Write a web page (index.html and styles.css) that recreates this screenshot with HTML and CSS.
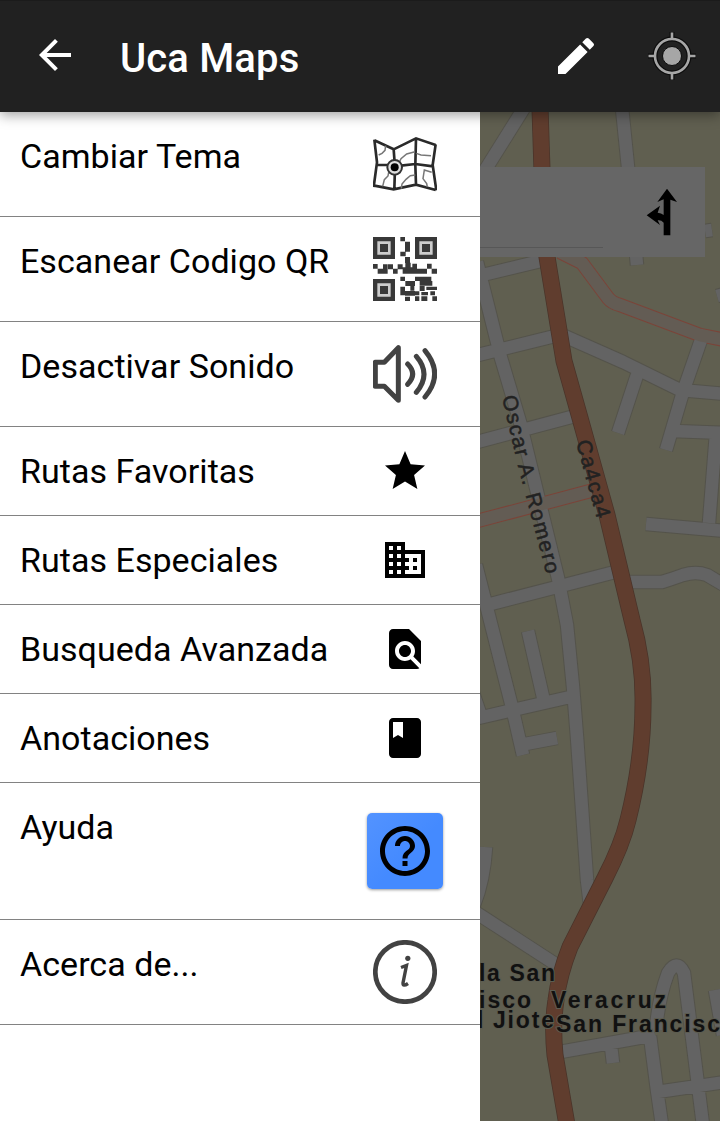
FILE: index.html
```html
<!DOCTYPE html>
<html lang="es">
<head>
<meta charset="utf-8">
<title>Uca Maps</title>
<link rel="stylesheet" href="styles.css">
</head>
<body>
<div class="app">
  <header class="bar">
    <svg class="back" viewBox="0 0 24 24"><path d="M20 11H7.83l5.59-5.59L12 4l-8 8 8 8 1.41-1.41L7.83 13H20z"/></svg>
    <h1 class="title">Uca Maps</h1>
    <svg class="edit" viewBox="0 0 24 24"><path d="M3 17.25V21h3.75L17.81 9.94l-3.75-3.75zM20.71 7.04a1 1 0 0 0 0-1.41l-2.34-2.34a1 1 0 0 0-1.41 0l-1.83 1.83 3.75 3.75z"/></svg>
    <svg class="locate" viewBox="0 0 48 48">
      <g class="locate-halo"><circle cx="24" cy="24" r="17"/><path d="M24 0v8M24 40v8M0 24h8M40 24h8"/></g>
      <g class="locate-ring"><circle cx="24" cy="24" r="17"/><path d="M24 .5v7M24 40.500v7M.5 24h7M40.500 24h7"/></g>
      <circle class="locate-dot" cx="24" cy="24" r="9.500"/>
    </svg>
  </header>
  <main class="body">
    <nav class="drawer">
      <div class="row"><span class="label">Cambiar Tema</span><span class="cell">
        <svg class="pic" viewBox="0 11 192 192">
          <g class="map-lines"><path d="M4 36 62 63 129 30 188 50M4 172 62 183 129 169 188 185M4 34 12 102 2 176M62 63 66 118 64 183M129 30 127 110 129 169M188 48 179 110 190 186M12 110H48M84 112 127 107 180 114"/></g>
          <g class="map-thin"><path d="M38 52 36 66 27 75 17 80M76 108 84 91 101 77 126 70M130 75 144 80 174 82M29 174 34 154 45 143 47 132M85 181 87 167 99 153 112 142 127 140M176 132 154 125 150 151 161 166 163 176"/></g>
          <circle class="map-pin-ring" cx="65" cy="117" r="22"/><circle cx="65" cy="117" r="12"/>
        </svg></span></div>
      <div class="row"><span class="label">Escanear Codigo QR</span><span class="cell">
        <svg class="pic qr" viewBox="0 0 192 192">
          <g><path d="M0 0h66v66H0zM126 0h66v66h-66zM0 126h66v66H0z"/>
          <path class="qr-light" d="M13 13h40v40H13zM139 13h40v40h-40zM13 139h40v40H13z"/>
          <path d="M21 21h24v24H21zM147 21h24v24h-24zM21 147h24v24H21z"/>
          <path d="M82 0h14v13H82zM96 14h15v30H96zM82 44h16v14H82zM96 60h15v18H96zM0 81h14v14H0zM14 95h30v15H14zM30 82h14v13H30zM45 82h15v15H45zM60 95h14v15H60zM74 82h15v15H74zM89 91h43v19H89zM97 77h16v14H97zM118 80h14v15h-14zM132 95h15v15h-15zM147 95h15v15h-15zM162 80h14v15h-14zM176 95h16v15h-16zM82 119h14v13H82zM126 119h49v13h-49zM97 132h29v15H97zM140 132h38v14h-38zM82 149h14v26H82zM96 162h30v14H96zM112 147h12v14h-12zM140 147h15v15h-15zM160 149h32v10h-32zM125 163h14v12h-14zM145 165h20v10h-20zM172 163h14v12h-14zM96 179h15v13H96zM126 178h13v14h-13zM145 178h18v14h-18zM178 178h14v14h-14z"/></g>
        </svg></span></div>
      <div class="row"><span class="label">Desactivar Sonido</span><span class="cell">
        <svg class="pic sound" viewBox="0 0 192 192"><path d="M7 61H34L76 17V175L34 133H7Z"/><path d="M104 66Q134 96 104 127M130 43Q176 96 130 151M156 26Q214 96 156 165"/></svg></span></div>
      <div class="row"><span class="label">Rutas Favoritas</span><span class="cell">
        <svg class="icon" viewBox="0 0 24 24"><path d="M12 17.27 18.180 21l-1.640-7.030L22 9.240l-7.190-.610L12 2 9.190 8.630 2 9.240l5.460 4.730L5.820 21z"/></svg></span></div>
      <div class="row"><span class="label">Rutas Especiales</span><span class="cell">
        <svg class="icon" viewBox="0 0 24 24"><path d="M12 7V3H2v18h20V7H12zM6 19H4v-2h2v2zm0-4H4v-2h2v2zm0-4H4V9h2v2zm0-4H4V5h2v2zm4 12H8v-2h2v2zm0-4H8v-2h2v2zm0-4H8V9h2v2zm0-4H8V5h2v2zm10 12h-8v-2h2v-2h-2v-2h2v-2h-2V9h8v10zm-2-8h-2v2h2v-2zm0 4h-2v2h2v-2z"/></svg></span></div>
      <div class="row"><span class="label">Busqueda Avanzada</span><span class="cell">
        <svg class="icon" viewBox="0 0 24 24"><path d="M20 19.590V8l-6-6H6c-1.100 0-1.990.9-1.990 2L4 20c0 1.100.89 2 1.990 2H18c.45 0 .85-.15 1.190-.4l-4.430-4.430c-.8.520-1.740.830-2.760.830-2.760 0-5-2.240-5-5s2.240-5 5-5 5 2.240 5 5c0 1.020-.31 1.960-.83 2.750L20 19.590zM9 13c0 1.660 1.340 3 3 3s3-1.340 3-3-1.340-3-3-3-3 1.340-3 3z"/></svg></span></div>
      <div class="row"><span class="label">Anotaciones</span><span class="cell">
        <svg class="icon" viewBox="0 0 24 24"><path d="M18 2H6c-1.100 0-2 .9-2 2v16c0 1.100.9 2 2 2h12c1.100 0 2-.9 2-2V4c0-1.100-.9-2-2-2zM6 4h5v8l-2.500-1.500L6 12V4z"/></svg></span></div>
      <div class="row"><span class="label">Ayuda</span><span class="cell help-cell"><span class="help">
        <svg viewBox="0 0 24 24"><path d="M11 18h2v-2h-2v2zm1-16C6.480 2 2 6.480 2 12s4.480 10 10 10 10-4.480 10-10S17.520 2 12 2zm0 18c-4.410 0-8-3.590-8-8s3.590-8 8-8 8 3.590 8 8-3.590 8-8 8zm0-14c-2.210 0-4 1.790-4 4h2c0-1.100.9-2 2-2s2 .9 2 2c0 2-3 1.750-3 5h2c0-2.250 3-2.500 3-5 0-2.210-1.790-4-4-4z"/></svg></span></span></div>
      <div class="row"><span class="label">Acerca de...</span><span class="cell">
        <svg class="pic info" viewBox="0 0 64 64"><circle cx="32" cy="32" r="29.700"/><path d="M28 27.500 33.500 25.500 30 43Q29.800 47 35 43.500"/><circle class="info-dot" cx="34.800" cy="18.300" r="2.600"/></svg></span></div>
    </nav>
    <section class="map">
      <svg class="map-art" viewBox="480 112 240 1009">
        <defs>
          <g id="streets">
            <path d="M524 108 484 172M622 108 628 167 637 265M705 231 712 230M717 296 724 294M470 278 545 260M477 262 501 358 520 422 558 578 567 625 573 687 577 737 587 880 590 905M470 357 555 336M562 335 623 362 680 390 725 394M701 340 683 392 666 450M637 375 618 433M673 431 725 433M716 434 709 523M646 524 725 531M470 444 575 416M476 565 490 620 512 707 523 755M487 605 615 572M625 582H662Q672 579 683 575 696 571 707 575L724 585M528 631 543 697M472 690 481 716M470 720 513 710 570 697M520 745 557 738M486 847Q484 880 474 905M472 910 560 967M560 1052 655 1035M611 1046 613 1063M650 1036 657 1090 662 1125M656 1030Q658 1000 668 973 677 958 684 973L692 1037 703 1125M657 1092 725 1082M715 990 723 1035"/>
          </g>
          <g id="avenue"><path d="M560 252 582 263 608 298Q612 303 620 305L700 335 725 340M470 523 594 490"/></g>
          <path id="highway" d="M540 108 542 170 547 257 564 361 580 418 607 515 632 620Q644 663 643 705 643 760 628 820 622 845 605 878L570 947Q559 975 556 1000 552 1025 555 1055L567 1125"/>
        </defs>
        <rect class="land" x="480" y="112" width="240" height="1009"/>
        <use href="#streets" class="street-edge"/><use href="#avenue" class="avenue-edge"/>
        <use href="#streets" class="street"/><use href="#avenue" class="avenue"/>
        <use href="#highway" class="highway-edge"/><use href="#highway" class="highway"/>
        <g class="street-name">
          <path id="oscar" class="guide" d="M502 397 519 470 547 576 556 610"/>
          <text><textPath href="#oscar" textLength="183">Oscar A. Romero</textPath></text>
          <path id="ca" class="guide" d="M576 442 597 519 606 552"/>
          <text><textPath href="#ca" textLength="80">Ca4ca4</textPath></text>
        </g>
        <g class="place">
          <text x="479" y="981" textLength="76">la San</text>
          <text x="479" y="1008" textLength="52">isco</text>
          <text x="551" y="1008" textLength="115">Veracruz</text>
          <text x="477" y="1028">l</text>
          <text x="493" y="1028" textLength="61">Jiote</text>
          <text x="556" y="1032" textLength="180">San Francisco</text>
        </g>
      </svg>
      <div class="search"><span class="search-line"></span>
        <svg class="turn" viewBox="0 0 96 144"><path d="M53 142V104Q45 95 35 97L42 111 2 82 42 53 35 74Q46 75 53 81V34L34 42 63 2 93 42 73 35V142Z"/></svg>
      </div>
    </section>
  </main>
</div>
</body>
</html>
```
FILE: styles.css
```css
* { box-sizing: border-box; }
body { margin: 0; background: #fff; font-family: Roboto, "Liberation Sans", sans-serif; }
.app { width: 720px; height: 1121px; display: flex; flex-direction: column; overflow: hidden; }
.bar { height: 112px; flex: none; display: flex; align-items: center; padding: 0 24px 1px 31px; background: #212121; color: #fff; border-top: 1px solid #1b1b1b; z-index: 2; box-shadow: 0 3px 12px rgba(0,0,0,.38); }
.back { width: 48px; height: 48px; margin-bottom: 2px; fill: #fff; }
.title { margin: 6px 0 0 41px; flex: 1; font-size: 40px; font-weight: 500; line-height: 48px; letter-spacing: .15px; }
.edit { width: 48px; height: 48px; fill: #fff; }
.locate { width: 48px; height: 48px; margin-left: 48px; overflow: visible; }
.locate-halo { fill: none; stroke: #0c0c0c; stroke-width: 5; }
.locate-ring { fill: none; stroke: #a6a6a6; stroke-width: 2.6; }
.locate-dot { fill: #a6a6a6; stroke: #0c0c0c; stroke-width: 1; }
.body { flex: 1; display: flex; min-height: 0; }
.drawer { width: 480px; background: #fff; }
.row { display: flex; align-items: flex-start; justify-content: space-between; padding: 20px 30px 20px 20px; border-bottom: 1px solid #828282; }
.label { font-size: 34px; line-height: 48px; letter-spacing: .04px; color: #000; white-space: nowrap; }
.cell { width: 90px; display: flex; justify-content: center; }
.pic { width: 64px; height: 64px; display: block; }
.icon { width: 48px; height: 48px; display: block; }
.map-lines { fill: none; stroke: #2a2a2a; stroke-width: 8; }
.map-thin { fill: none; stroke: #777; stroke-width: 4.5; }
.map-pin-ring { fill: #ddd; stroke: #333; stroke-width: 6; }
.qr { fill: #383838; }
.qr-light { fill: #ccc; }
.sound { fill: none; stroke: #424242; stroke-width: 15; stroke-linecap: round; stroke-linejoin: round; }
.help-cell { height: 96px; align-items: center; }
.help { width: 76px; height: 76px; display: flex; align-items: center; justify-content: center; border-radius: 5px; background: linear-gradient(135deg, #5393ff, #448aff 55%); box-shadow: 0 1px 3px rgba(0,0,0,.4); }
.help svg { width: 60px; height: 60px; }
.info { fill: none; stroke: #424242; stroke-width: 4.7; }
.info path { stroke-width: 3.4; }
.info .info-dot { fill: #424242; stroke: none; }
.map { width: 240px; display: grid; background: #605f50; }
.map-art { grid-area: 1 / 1; width: 240px; height: 1009px; display: block; }
.land { fill: #605f50; }
.street, .street-edge, .avenue, .avenue-edge, .highway, .highway-edge, .guide { fill: none; stroke-linejoin: round; }
.street-edge { stroke: #54534b; stroke-width: 14.5; }
.street { stroke: #636363; stroke-width: 12.5; }
.avenue-edge { stroke: #7b4439; stroke-width: 14.5; }
.avenue { stroke: #635c54; stroke-width: 12.5; }
.highway-edge { stroke: #49342a; stroke-width: 17; }
.highway { stroke: #603d2e; stroke-width: 15.5; }
.street-name { font: 21px "Liberation Sans", sans-serif; fill: #222; stroke: #222; stroke-width: .5px; }
.street-name .guide { stroke: none; }
.place { font: bold 23px "Liberation Sans", sans-serif; fill: #111; stroke: #5c5c50; stroke-width: 2px; paint-order: stroke; }
.search { grid-area: 1 / 1; width: 225px; height: 90px; margin-top: 55px; background: #666; display: flex; align-items: flex-start; justify-content: space-between; padding: 21px 27px 0 0; }
.search-line { width: 123px; height: 1px; margin-top: 59px; background: #575757; }
.turn { width: 32px; height: 48px; }
```
